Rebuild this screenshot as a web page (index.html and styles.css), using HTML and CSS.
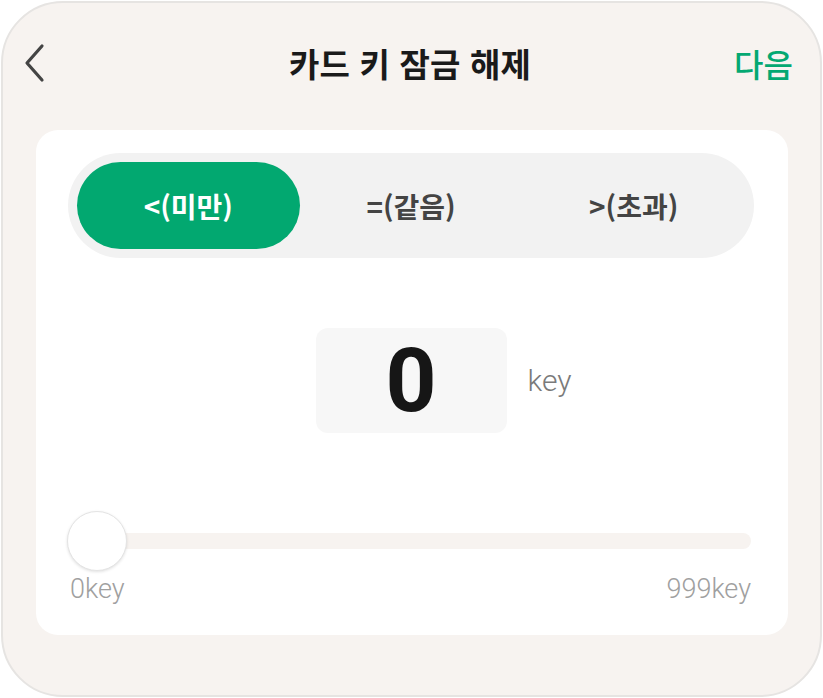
FILE: index.html
```html
<!DOCTYPE html>
<html lang="ko">
<head>
<meta charset="utf-8">
<link rel="stylesheet" href="styles.css">
</head>
<body>
<div class="phone">
  <header class="header">
    <button class="back" aria-label="뒤로">
      <svg width="24" height="40" viewBox="0 0 24 40"><path d="M20 3 L5 20 L20 37" fill="none" stroke="#444" stroke-width="3.2" stroke-linecap="round" stroke-linejoin="round"/></svg>
    </button>
    <h1 class="title">카드 키 잠금 해제</h1>
    <a class="next">다음</a>
  </header>
  <section class="card">
    <div class="segment">
      <div class="seg active">&lt;(미만)</div>
      <div class="seg">=(같음)</div>
      <div class="seg">&gt;(초과)</div>
    </div>
    <div class="value-row">
      <div></div>
      <div class="value-box">0</div>
      <div class="unit">key</div>
    </div>
    <div class="slider">
      <div class="track"></div>
      <div class="thumb"></div>
    </div>
    <div class="labels">
      <span>0key</span>
      <span>999key</span>
    </div>
  </section>
</div>
</body>
</html>
```
FILE: styles.css
```css
* { box-sizing: border-box; }
html, body { margin: 0; padding: 0; background: #fff; }
body { font-family: "Noto Sans CJK KR", "Noto Sans", sans-serif; }
.phone {
  margin: 1px;
  width: 821px;
  height: 696px;
  border: 2px solid #e6e4e2;
  border-radius: 62px;
  background: #f7f3f0;
  overflow: hidden;
}
.header {
  height: 120px;
  display: flex;
  align-items: center;
  position: relative;
  padding: 0 27px 0 19px;
}
.back {
  background: none;
  border: 0;
  padding: 0;
  width: 24px;
  height: 40px;
  display: flex;
}
.title {
  flex: 1;
  margin: 0;
  text-align: center;
  font-size: 33px;
  font-weight: 700;
  letter-spacing: 0.2px;
  color: #1a1a1a;
  padding-left: 40px;
}
.next {
  font-size: 32px;
  font-weight: 500;
  color: #04a872;
}
.card {
  margin: 7px 32px 0 33px;
  height: 505px;
  background: #fff;
  border-radius: 22px;
  padding: 23px 34px 0 32px;
}
.segment {
  height: 105px;
  background: #f2f2f2;
  border-radius: 53px;
  padding: 9px;
  display: grid;
  grid-template-columns: 1fr 1fr 1fr;
}
.seg {
  display: flex;
  align-items: center;
  justify-content: center;
  font-size: 28px;
  font-weight: 700;
  color: #444;
  border-radius: 44px;
}
.seg.active {
  background: #02a870;
  color: #fff;
}
.value-row {
  margin-top: 70px;
  display: grid;
  grid-template-columns: 1fr 191px 1fr;
  align-items: center;
}
.value-box {
  height: 105px;
  background: #f7f7f7;
  border-radius: 12px;
  display: flex;
  align-items: center;
  justify-content: center;
  font-family: "Roboto", sans-serif;
  font-size: 89px;
  font-weight: 700;
  color: #161616;
  line-height: 1;
}
.unit {
  padding-left: 21px;
  font-family: "Roboto", sans-serif;
  font-size: 30px;
  font-weight: 300;
  color: #7a7a7a;
}
.slider {
  position: relative;
  margin-top: 78px;
  height: 60px;
  display: flex;
  align-items: center;
}
.track {
  flex: 1;
  height: 16px;
  margin-left: 1px;
  margin-right: 3px;
  background: #f7f3f0;
  border-radius: 8px;
}
.thumb {
  position: absolute;
  left: -1px;
  top: 0;
  width: 60px;
  height: 60px;
  border-radius: 50%;
  background: #fff;
  border: 1px solid #e4e4e4;
  box-shadow: 0 1px 3px rgba(0,0,0,0.12);
}
.labels {
  margin-top: 2px;
  display: flex;
  justify-content: space-between;
  padding: 0 3px 0 2px;
  font-family: "Roboto", sans-serif;
  font-size: 27px;
  font-weight: 300;
  color: #a0a0a0;
}
```
